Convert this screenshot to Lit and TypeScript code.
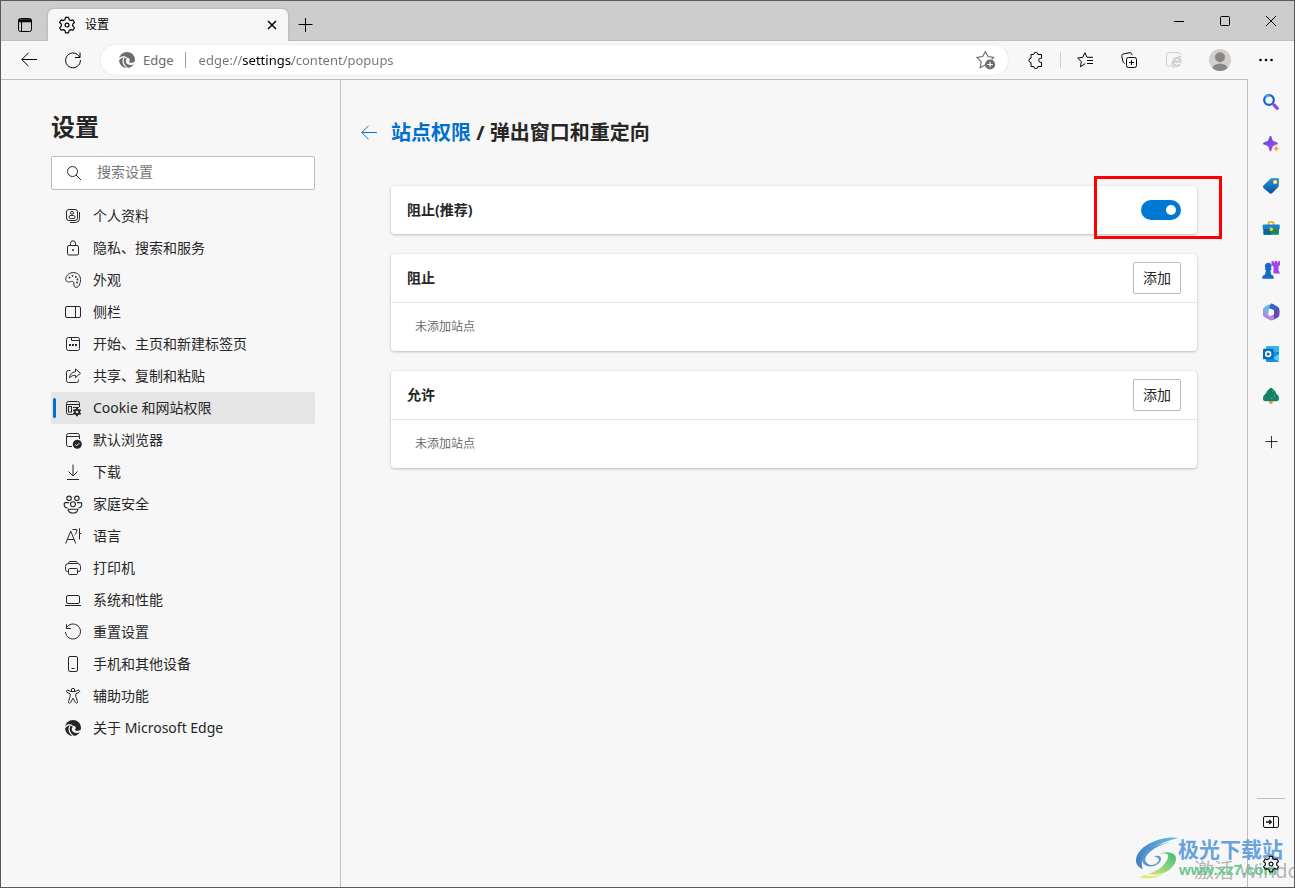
import { LitElement, html, css, svg } from "lit";
import { customElement, property } from "lit/decorators.js";
import { classMap } from "lit/directives/class-map.js";

const edgeShape = (gap: string) => svg`
  <circle cx="8" cy="8" r="8" fill="currentColor" stroke="none"/>
  <path d="M-.5 8C1.500 4.600 5 4.200 7.300 5.600" fill="none" stroke=${gap} stroke-width="1.300"/>
  <path d="M4.800 6C3 9.600 4.600 13.800 8.400 16" fill="none" stroke=${gap} stroke-width="1.200"/>
  <path d="M7 6c2.300-.8 4.300.8 3.600 2.700-.3.800-.9 1-.4 1.500 1.200 1 3.800.8 6-.8l-.6 2.300c-2 1.600-5 1.800-6.800.6C6.600 11 6 8.500 7.600 7.200z" fill=${gap} stroke="none"/>`;

const gearPath = "M6.700.8h2.600l.5 2 1.400.8 2-.6 1.300 2.300-1.500 1.400v1.700l1.500 1.400-1.300 2.300-2-.6-1.400.8-.5 2H6.700l-.5-2-1.400-.8-2 .6-1.300-2.300L3 8.400V6.700L1.500 5.300 2.800 3l2 .6 1.400-.8z";

const icons: Record<string, unknown> = {
  gear: svg`<g transform="translate(-1.100 -.5) scale(1.140)" stroke-linejoin="round" stroke-width="1.050"><path d=${gearPath}/><circle cx="8" cy="7.500" r="1.700"/></g>`,
  tabs: svg`<rect x="1.500" y="1.500" width="13" height="13" rx="2"/><path d="M1.500 3h13M1.500 4.500h13" stroke-width="1.600"/><path d="M4.500 4v10.500"/>`,
  close: svg`<path d="M4 4l8 8M12 4l-8 8" stroke-width="1.500"/>`,
  plus: svg`<path d="M8.500 1v14M1.500 7.500h14"/>`,
  minus: svg`<path d="M3 8.500h10"/>`,
  maximize: svg`<rect x="3.500" y="3.500" width="9" height="9" rx="1"/>`,
  closeWindow: svg`<path d="M3 3l10 10M13 3L3 13"/>`,
  back: svg`<path d="M16 7.500H.8M7.500.8L.8 7.500l6.700 6.700"/>`,
  refresh: svg`<path d="M14.700 5.200A7.400 7.400 0 1 0 15.400 8M15 .5v5h-5"/>`,
  edge: edgeShape("#fff"),
  edgeDark: edgeShape("#f7f7f7"),
  starAdd: svg`<path d="M8.500 12.200L3.700 14.800l.9-5.300L.8 5.700l5.200-.8L8.300.6l2.400 4.300 5 .8-1.800 1.800"/><circle cx="12.500" cy="12" r="4.500" fill="currentColor" stroke="none"/><path d="M12.500 9.500v5M10 12h5" stroke="#fff"/>`,
  puzzle: svg`<path d="M3 2.500h2.700a2.100 2.100 0 0 1 4.200 0H13.500v3.800h-.8a2 2 0 0 0 0 4h.8v4.200H9.900a2.100 2.100 0 0 1-4.200 0H3v-4a2.100 2.100 0 0 1 0-4.200z"/>`,
  favorites: svg`<path d="M8.200 11.600L3.400 14.800l1-5.200L.7 6l5-.7L7.900.8 10 5.300h6M10 8.500h6M10 11.500h6"/>`,
  collections: svg`<rect x="5.500" y="5.500" width="10" height="10" rx="2"/><path d="M10.500 8v5M8 10.500h5M3.700 11.500C2.500 11 2.300 10.500 2 9.500L.8 4.500C.5 3 1 2.300 2.300 2L8 .8c1.500-.3 2.300 0 2.800 1.500l.3 1"/>`,
  ie: svg`<path d="M4 14.500H3A2.500 2.500 0 0 1 .5 12V3A2.500 2.500 0 0 1 3 .5h9A2.500 2.500 0 0 1 14.500 3"/><path d="M14 12.300c-1.300 2.200-5.500 2-6.300-.3C6.700 8.700 8.300 6 11 6c2.800 0 3.800 1.500 3.500 3.700H8.500" stroke-width="2.200"/><path d="M15.500 4.500c-3-1-10 4.500-10 8.500 0 2.500 2.300 2.500 4 1.800" stroke-width="1.200"/>`,
  avatar: svg`<defs><clipPath id="face"><circle cx="8" cy="8" r="8"/></clipPath></defs><circle cx="8" cy="8" r="8" fill="#d2d0ce" stroke="none"/><g clip-path="url(#face)" fill="#8a8684" stroke="none"><circle cx="8" cy="6" r="3.600"/><ellipse cx="8" cy="14.300" rx="5.600" ry="3.800"/></g>`,
  more: svg`<g fill="currentColor" stroke="none"><circle cx="2.500" cy="8" r="1.300"/><circle cx="8" cy="8" r="1.300"/><circle cx="13.500" cy="8" r="1.300"/></g>`,
  search: svg`<circle cx="6.500" cy="6.500" r="5"/><path d="M10 10l5 5"/>`,
  profile: svg`<rect x="1.500" y="1.500" width="11" height="11" rx="2.500"/><circle cx="7" cy="4.800" r="1.500"/><rect x="4" y="7.500" width="6" height="3" rx="1.500"/><path d="M14.500 4v6.500a4 4 0 0 1-4 4H5"/>`,
  lock: svg`<rect x="2.500" y="5.500" width="11" height="9.500" rx="1.500"/><path d="M5.500 5.500V3.300a2.500 2.500 0 0 1 5 0v2.200"/><circle cx="8" cy="10" r="1" fill="currentColor" stroke="none"/>`,
  palette: svg`<path d="M.7 7.300C1 3 4.500.6 8.500.6c4.300 0 7 3.200 7 7 0 4-1.700 7.800-4.300 7.800-2 0-2.300-1.500-2.300-3.300 0-2-.8-3-2.300-2.700-1.800.3-2.300 1-4 .3C1.300 9.200.6 8.600.7 7.300z"/><g fill="currentColor" stroke="none"><circle cx="7.500" cy="3.800" r=".9"/><circle cx="10.800" cy="5" r=".9"/><circle cx="12.500" cy="7.500" r=".9"/><circle cx="12" cy="10.500" r=".9"/><circle cx="4.500" cy="5.500" r=".9"/></g>`,
  sidebar: svg`<rect x=".5" y="2.500" width="15" height="11" rx="1.500"/><path d="M10.500 2.500v11"/>`,
  newtab: svg`<rect x="1.500" y="1.500" width="13" height="13" rx="2"/><path d="M6.500 1.500v3h8"/><path d="M4 9h2M7 9h2M10 9h2" stroke-width="1.800"/>`,
  share: svg`<path d="M5.500 2.500h-2a2 2 0 0 0-2 2v8a2 2 0 0 0 2 2h8a2 2 0 0 0 2-2v-1"/><path d="M10.500 1l5 4.300-5 4.300V7.300c-2.800 0-4.500.7-6 2.700.3-3.700 2.300-6 6-6.300z"/>`,
  cookies: svg`<path d="M8 14.500H3.500a2 2 0 0 1-2-2v-9a2 2 0 0 1 2-2h9a2 2 0 0 1 2 2V7M1.500 4.500h13M8 7.500h6"/><rect x="3.500" y="6.500" width="3" height="5.500"/><g fill="currentColor"><circle cx="12" cy="12" r="2.700"/><path d="M12 7.700v8.600M8.300 9.900l7.400 4.200M8.300 14.100l7.400-4.200" stroke-width="1.900"/></g><circle cx="12" cy="12" r="1.300" fill="#e5e5e5" stroke="none"/>`,
  browser: svg`<path d="M7 14.500H3.500a2 2 0 0 1-2-2v-9a2 2 0 0 1 2-2h9a2 2 0 0 1 2 2V7M1.500 4.500h13"/><circle cx="12.300" cy="12.300" r="4.500" fill="currentColor" stroke="none"/><path d="M10.200 12.300l1.500 1.500 2.700-2.800" stroke="#f7f7f7"/>`,
  download: svg`<path d="M8 .5V12M3.500 7.500L8 12l4.500-4.500M2 15.500h12"/>`,
  family: svg`<g transform="translate(-1 -.7) scale(1.120)"><circle cx="4.500" cy="2.700" r="2"/><circle cx="11.500" cy="2.700" r="2"/><circle cx="8" cy="8" r="2.200"/><path d="M3.200 11.300C1.500 11.200-.2 10 .2 7.500c0-.7.300-1 1-1h3.300M12.800 11.300c1.800-.1 3.400-1.300 3-3.800 0-.7-.3-1-1-1h-3.300"/><path d="M3.700 12.400h8.600c.3 2-1.800 3.400-4.300 3.400s-4.600-1.400-4.300-3.400z"/></g>`,
  language: svg`<path d="M.7 15.500L5.700 3l5 12.500M2.400 11.500h6.600M7.500 1.500H12C12 4 11 6 9.500 7M14.500.3v11M14.500 5.500H16.300"/>`,
  printer: svg`<path d="M3.500 11.500h-1a2 2 0 0 1-2-2v-3a3 3 0 0 1 3-3h9a3 3 0 0 1 3 3v3a2 2 0 0 1-2 2h-1M3.500 3.500c0-1.500.5-2 1.500-2h6c1 0 1.500.5 1.500 2"/><rect x="3.500" y="8.500" width="9" height="6" rx="1"/>`,
  laptop: svg`<rect x="1.500" y="3.500" width="13" height="8" rx="1.500"/><path d="M0 13.500h16"/>`,
  reset: svg`<path d="M1.200 4.300A7.500 7.500 0 1 1 .5 8M1.500.3v4.200h4.300"/>`,
  phone: svg`<rect x="3.500" y=".5" width="9" height="15" rx="1.500"/><path d="M6.500 12.500h3"/>`,
  access: svg`<circle cx="8" cy="2" r="1.700"/><path d="M6 3.500L3 2.200c-1.500-.5-2.300 1.500-1 2.200l3.200 1.400v2.700l-1.700 5c-.5 1.700 1.500 2.400 2.200.9L8 10.200l2.300 4.200c.7 1.500 2.700.8 2.200-.9l-1.700-5V5.800L14 4.400c1.300-.7.5-2.700-1-2.200l-3 1.300z"/>`,
  panel: svg`<rect x=".5" y="2.500" width="15" height="11" rx="1.500"/><path d="M10.500 2.500v11"/><path d="M3 8h5.300M6.300 6l2 2-2 2" stroke-width="1.300"/>`,
  appSearch: svg`<circle cx="6" cy="6" r="4.800" stroke="#1666cf" stroke-width="2.300"/><path d="M2.500 3.500a4.800 4.800 0 0 1 4-2.300" stroke="#3ba4ea" stroke-width="2.300"/><path d="M11 11l3.300 3.300" stroke="#8d48d8" stroke-width="3.200" stroke-linecap="round"/>`,
  appSpark: svg`<defs><linearGradient id="spark" x2="1" y2="1"><stop stop-color="#4a49dd"/><stop offset="1" stop-color="#b54bf5"/></linearGradient></defs><path d="M7.500-.3c1.400 0 1.500 3.700 2.500 4.900s5 1.400 5 2.900-4 1.700-5 2.900-1.100 4.900-2.500 4.900-1.500-3.700-2.500-4.900S0 9 0 7.500s4-1.700 5-2.900S6.100-.3 7.500-.3z" fill="url(#spark)" stroke="#f7f7f7" stroke-width=".2"/><path d="M13.200 8.700l1.100 2.900 2.700 1.100-2.700 1.100-1.100 2.900-1.100-2.900-2.700-1.100 2.700-1.100z" fill="#f5a623" stroke="#f7f7f7" stroke-width=".5"/>`,
  appTag: svg`<defs><linearGradient id="tag" x2="0" y2="1"><stop stop-color="#2398dc"/><stop offset="1" stop-color="#0b4ea5"/></linearGradient></defs><path d="M8.500.3 14.500 0q1.500 0 1.500 1.500l-.2 6q0 1-1 1.900l-5.500 5.500q-1.500 1.500-3 0L.7 10.300q-1.500-1.500 0-3L7 1.200Q7.700.3 8.500.3z" fill="url(#tag)" stroke="none"/><circle cx="12.200" cy="4" r="1.700" fill="#fff" stroke="#ffc42e" stroke-width="1.100"/>`,
  appTools: svg`<path d="M5.500 5V3q0-1 1-1h3q1 0 1 1v2" stroke="#e8a317" stroke-width="1.600"/><rect x="-.3" y="4.500" width="17" height="5" rx="1" fill="#1683cb" stroke="none"/><path d="M.5 9h15.500v4.700q0 1-1 1H1.500q-1 0-1-1z" fill="#1a8a5c" stroke="none"/><path d="M.5 9h7.700v5.700H1.500q-1 0-1-1z" fill="#086a91" stroke="none"/><rect x="6.700" y="7.500" width="3.200" height="3.500" rx="1" fill="#ffbd24" stroke="none"/>`,
  appGames: svg`<path d="M8.500-1h2v1.500h1.200V-1h2.300v1.500h1.200V-1H17v4l-1.500 1.500V8l1.500 3.500h-6.500v-7L8.500 3z" fill="#a044e7" stroke="none"/><path d="M5.500.8a3.200 3.200 0 0 1 2.300 5.300l1 1.200-1.300 1 .6 4 2 1.500q.7.500.7 3H-.8q0-2.500.8-3l2.200-1.500.7-4-1.300-1 1.100-1.200A3.200 3.200 0 0 1 5.500.8z" fill="#1769c4" stroke="none"/>`,
  app365: svg`<path d="M4.500 1.300Q6 .3 8 .3h3L6 4v5.500L0 12V5.500Q0 4 1.500 3z" fill="#69b5ed" stroke="none"/><path d="M8-.4q1-.3 2 .3l5 3Q16.300 3.800 16.300 5.500v5L11 7 6 4.300z" fill="#3467bc" stroke="none"/><path d="M16.300 6v5q0 1.500-1.500 2.500L9.500 16.300 5 14l6-3.500V5z" fill="#6548af" stroke="none"/><path d="M0 6l5.300 5L8 12.500l3-1.500v4l-1.500 1q-1.500.8-3 0L1.200 13Q0 12.300 0 11z" fill="#b18ae0" stroke="none"/><path d="M5.500 6L8 4.700 11 6.300v3.700L8.300 11.500 5.500 10z" fill="#f7f7f7" stroke="none"/>`,
  appOutlook: svg`<rect x="3" y="0" width="13" height="14" rx="1" fill="#35b3ed" stroke="none"/><path d="M3 6h13v9q0 1-1 1H4q-1 0-1-1z" fill="#1490df" stroke="none"/><path d="M16 8v8l-6-4z" fill="#5bd0f6" stroke="none"/><rect x="0" y="2.800" width="10.500" height="10.500" rx="1" fill="#0868bd" stroke="none"/><circle cx="5.200" cy="8" r="2.400" stroke="#fff" stroke-width="1.600"/>`,
  appTree: svg`<path d="M6.300 11h3.400v4q0 1-1 1h-1.400q-1 0-1-1z" fill="#f1a31f" stroke="none"/><path d="M8-.2q1.200 0 2.400 1.700 2.600 1.500 2.800 4Q16 7.500 16 10.500q0 2.700-2.500 2.700h-11Q0 13.200 0 10.500q0-3 3-5.200Q3.200 3 5.800 1.500 6.800-.2 8-.2z" fill="#158269" stroke="none"/><path d="M9.500 3l1 .5M11 7l1.500 1M8 10l1.500.5" stroke="#49b07d" stroke-width="1.500"/>`,
};

@customElement("ui-icon")
export class UiIcon extends LitElement {
  @property() name = "";
  static styles = css`
    :host { display: inline-flex; flex: none; width: 16px; height: 16px; }
    .glyph { width: 100%; height: 100%; overflow: visible; fill: none; stroke: currentColor; stroke-width: 1; }
  `;
  render() {
    return html`<svg class="glyph" viewBox="0 0 16 16" aria-hidden="true">${icons[this.name]}</svg>`;
  }
}

const fonts = css`"Noto Sans", "Noto Sans CJK SC", sans-serif`;

@customElement("browser-chrome")
export class BrowserChrome extends LitElement {
  static styles = css`
    :host { display: block; flex: none; font: 13px/20px ${fonts}; color: #000; }
    button { border: 0; padding: 0; background: none; color: inherit; font: inherit; display: flex; align-items: center; justify-content: center; }
    .strip { display: flex; align-items: flex-end; height: 40px; background: #cdcdcd; box-shadow: inset 0 -1px #bebebe; }
    .action { width: 47px; height: 32px; }
    .tab { display: flex; align-items: center; gap: 10px; box-sizing: border-box; width: 240px; height: 32px; padding: 0 8px 0 11px; background: #f7f7f7; border-radius: 6px 6px 0 0; box-shadow: 0 0 3px #0003; clip-path: inset(-3px -3px 0 -3px); }
    .name { flex: 1; font-size: 12px; }
    .new { width: 34px; height: 32px; }
    .controls { display: flex; height: 40px; margin-left: auto; }
    .control { width: 46px; height: 40px; }
    .toolbar { display: flex; align-items: center; height: 38px; padding: 0 5px 0 6px; background: #f7f7f7; }
    .tool { width: 44px; height: 32px; flex: none; }
    .wide { width: 46px; }
    .address { display: flex; align-items: center; flex: 1; min-width: 0; height: 30px; box-sizing: border-box; margin: 0 6px; padding: 0 14px 0 18px; border-radius: 15px; background: #fff; box-shadow: 0 0 3px #00000014; color: #6b6b6b; }
    .brand { margin-left: 8px; }
    .bar { width: 1px; height: 16px; margin: 0 13px 0 11px; background: #9a9a9a; }
    .url { flex: 1; min-width: 0; border: 0; padding: 0; outline: 0; font: inherit; color: transparent; background: linear-gradient(90deg, #737373 44px, #000 44px, #000 93px, #737373 93px); -webkit-background-clip: text; background-clip: text; }
    .star { width: 18px; height: 18px; color: #6b6b6b; }
    .divider { width: 1px; height: 16px; margin: 0 2px; background: #cfcfcf; }
    .muted { color: #cfcfcf; }
    .avatar { width: 22px; height: 22px; }
  `;
  render() {
    return html`
      <div class="strip">
        <button class="action" aria-label="标签操作"><ui-icon name="tabs"></ui-icon></button>
        <div class="tab">
          <ui-icon name="gear"></ui-icon><span class="name">设置</span>
          <button aria-label="关闭标签页"><ui-icon name="close"></ui-icon></button>
        </div>
        <button class="new" aria-label="新建标签页"><ui-icon name="plus"></ui-icon></button>
        <div class="controls">
          <button class="control" aria-label="最小化"><ui-icon name="minus"></ui-icon></button>
          <button class="control" aria-label="最大化"><ui-icon name="maximize"></ui-icon></button>
          <button class="control" aria-label="关闭"><ui-icon name="closeWindow"></ui-icon></button>
        </div>
      </div>
      <div class="toolbar">
        <button class="tool" aria-label="返回"><ui-icon name="back"></ui-icon></button>
        <button class="tool" aria-label="刷新"><ui-icon name="refresh"></ui-icon></button>
        <div class="address">
          <ui-icon name="edge"></ui-icon><span class="brand">Edge</span><span class="bar"></span>
          <input class="url" aria-label="地址栏" value="edge://settings/content/popups" />
          <button aria-label="收藏此页"><ui-icon class="star" name="starAdd"></ui-icon></button>
        </div>
        <button class="tool" aria-label="扩展"><ui-icon name="puzzle"></ui-icon></button>
        <span class="divider"></span>
        <button class="tool" aria-label="收藏夹"><ui-icon name="favorites"></ui-icon></button>
        <button class="tool" aria-label="集锦"><ui-icon name="collections"></ui-icon></button>
        <button class="tool wide muted" aria-label="IE 模式"><ui-icon name="ie"></ui-icon></button>
        <button class="tool wide" aria-label="个人资料"><ui-icon class="avatar" name="avatar"></ui-icon></button>
        <button class="tool wide" aria-label="更多"><ui-icon name="more"></ui-icon></button>
      </div>`;
  }
}

const sections: [string, string][] = [
  ["profile", "个人资料"],
  ["lock", "隐私、搜索和服务"],
  ["palette", "外观"],
  ["sidebar", "侧栏"],
  ["newtab", "开始、主页和新建标签页"],
  ["share", "共享、复制和粘贴"],
  ["cookies", "Cookie 和网站权限"],
  ["browser", "默认浏览器"],
  ["download", "下载"],
  ["family", "家庭安全"],
  ["language", "语言"],
  ["printer", "打印机"],
  ["laptop", "系统和性能"],
  ["reset", "重置设置"],
  ["phone", "手机和其他设备"],
  ["access", "辅助功能"],
  ["edgeDark", "关于 Microsoft Edge"],
];

@customElement("settings-nav")
export class SettingsNav extends LitElement {
  static styles = css`
    :host { display: block; flex: none; box-sizing: border-box; width: 340px; padding: 31px 25px 0 50px; border-right: 1px solid #bdbdbd; font: 14px/20px ${fonts}; color: #262626; }
    .title { margin: 0 0 13px; font-size: 24px; line-height: 32px; font-weight: 700; }
    .search { display: flex; align-items: center; gap: 15px; box-sizing: border-box; height: 34px; padding: 0 14px; border: 1px solid #bcbcbc; border-radius: 2px; background: #fff; }
    .field { flex: 1; min-width: 0; border: 0; padding: 0 0 2px; outline: 0; background: none; font: inherit; color: inherit; }
    .field::placeholder { color: #767676; }
    .list { display: flex; flex-direction: column; padding-top: 10px; }
    .item { position: relative; display: flex; align-items: center; gap: 12px; height: 32px; padding-left: 14px; border-radius: 2px; color: inherit; text-decoration: none; }
    .active { background: #e5e5e5; }
    .active::before { content: ""; position: absolute; left: 2px; top: 6px; bottom: 6px; width: 3px; border-radius: 2px; background: #0070cc; }
  `;
  render() {
    return html`
      <h1 class="title">设置</h1>
      <label class="search"><ui-icon name="search"></ui-icon><input class="field" type="text" placeholder="搜索设置" aria-label="搜索设置" /></label>
      <nav class="list">
        ${sections.map(([icon, label]) => html`
          <a href="#${icon}" class=${classMap({ item: true, active: icon === "cookies" })}><ui-icon name=${icon}></ui-icon><span>${label}</span></a>`)}
      </nav>`;
  }
}

@customElement("popup-settings")
export class PopupSettings extends LitElement {
  static styles = css`
    :host { display: block; flex: 1; min-width: 0; padding: 38px 50px 0 0; font: 14px/20px ${fonts}; color: #262626; }
    .head { display: flex; align-items: center; gap: 14px; padding-left: 20px; margin-bottom: 38px; }
    .back { display: flex; border: 0; padding: 0; background: none; color: #0078d4; }
    .crumbs { margin: 0; font-size: 20px; line-height: 30px; font-weight: 700; }
    .link { color: #0070cc; text-decoration: none; }
    .cards { display: flex; flex-direction: column; gap: 20px; padding-left: 50px; }
    .card { position: relative; background: #fff; border-radius: 4px; box-shadow: 0 1px 3px #00000038, 0 0 2px #00000014; }
    .row { display: flex; align-items: center; justify-content: space-between; height: 48px; padding: 0 16px; }
    .label { margin: 0; font-size: 14px; line-height: 20px; font-weight: 700; }
    .empty { display: flex; align-items: center; height: 48px; margin: 0; padding: 0 24px; border-top: 1px solid #e5e5e5; font-size: 12px; color: #6b6b6b; }
    .add { height: 32px; padding: 0 9px; border: 1px solid #bcbcbc; border-radius: 2px; background: #fff; color: inherit; font: inherit; }
    .toggle { appearance: none; display: flex; align-items: center; justify-content: flex-end; box-sizing: border-box; width: 40px; height: 20px; margin: 0; padding: 0 5px; border-radius: 10px; background: #0078d4; }
    .toggle::before { content: ""; width: 10px; height: 10px; border-radius: 50%; background: #fff; }
    .toggle:not(:checked) { justify-content: flex-start; background: #8a8a8a; }
    .mark { position: absolute; top: -10px; right: -25px; box-sizing: border-box; width: 128px; height: 63px; border: 3px solid #f00; pointer-events: none; }
  `;
  render() {
    return html`
      <div class="head">
        <button class="back" aria-label="返回"><ui-icon name="back"></ui-icon></button>
        <h2 class="crumbs"><a class="link" href="#content">站点权限</a> / 弹出窗口和重定向</h2>
      </div>
      <div class="cards">
        <section class="card">
          <div class="row"><label class="label" for="block">阻止(推荐)</label><input class="toggle" id="block" type="checkbox" role="switch" checked /></div>
          <div class="mark"></div>
        </section>
        ${["阻止", "允许"].map((title) => html`
          <section class="card">
            <div class="row"><h3 class="label">${title}</h3><button class="add">添加</button></div>
            <p class="empty">未添加站点</p>
          </section>`)}
      </div>`;
  }
}

const apps: [string, string][] = [
  ["appSearch", "搜索"], ["appSpark", "发现"], ["appTag", "购物"], ["appTools", "工具"],
  ["appGames", "游戏"], ["app365", "Microsoft 365"], ["appOutlook", "Outlook"], ["appTree", "电子树"],
];

@customElement("edge-sidebar")
export class EdgeSidebar extends LitElement {
  static styles = css`
    :host { position: relative; z-index: 2; display: flex; flex-direction: column; align-items: center; flex: none; width: 46px; padding: 2px 0; box-sizing: border-box; color: #111; }
    .app { display: flex; align-items: center; justify-content: center; width: 46px; height: 42px; flex: none; border: 0; padding: 0; background: none; color: inherit; }
    .add { margin-top: 4px; }
    .small { width: 14px; height: 14px; }
    .rule { width: 28px; height: 1px; margin: auto 0 2px; background: #bdbdbd; }
  `;
  render() {
    return html`
      ${apps.map(([icon, label]) => html`<button class="app" aria-label=${label}><ui-icon name=${icon}></ui-icon></button>`)}
      <button class="app add" aria-label="添加"><ui-icon class="small" name="plus"></ui-icon></button>
      <div class="rule"></div>
      <button class="app" aria-label="隐藏侧栏"><ui-icon name="panel"></ui-icon></button>
      <button class="app" aria-label="设置"><ui-icon name="gear"></ui-icon></button>`;
  }
}

@customElement("app-root")
export class AppRoot extends LitElement {
  static styles = css`
    :host { display: block; }
    .window { position: relative; display: flex; flex-direction: column; box-sizing: border-box; min-height: 100vh; overflow: hidden; border: 1px solid #59595b; background: #f7f7f7; }
    .body { display: flex; flex: 1; }
    .page { display: flex; flex: 1; min-width: 0; border: solid #bdbdbd; border-width: 1px 1px 0 0; }
    .watermark { position: absolute; z-index: 1; right: 0; bottom: 0; width: 159px; height: 54px; pointer-events: none; font-family: "Noto Sans CJK SC", sans-serif; white-space: nowrap; }
    .logo { position: absolute; left: 0; top: 3px; width: 46px; height: 44px; }
    .site { position: absolute; left: 43px; top: 0; font-size: 21px; line-height: 30px; font-weight: 700; color: #6aa2dc; }
    .host { position: absolute; left: 44px; top: 27px; font: 700 15px/20px "Liberation Sans", sans-serif; color: #68c98d; }
    .activate { position: absolute; left: 59px; top: 24px; font: 20px/28px "Noto Sans", "Noto Sans CJK SC", sans-serif; color: #8888889c; }
  `;
  render() {
    return html`
      <div class="window">
        <browser-chrome></browser-chrome>
        <div class="body">
          <div class="page"><settings-nav></settings-nav><popup-settings></popup-settings></div>
          <edge-sidebar></edge-sidebar>
        </div>
        <div class="watermark">
          <span class="activate">激活 Windows</span>
          <svg class="logo" viewBox="0 0 46 44" aria-hidden="true">
            <defs>
              <linearGradient id="sky" x2="1" y2="0"><stop stop-color="#477fc2"/><stop offset="1" stop-color="#67c4ef"/></linearGradient>
              <linearGradient id="leaf" x1="1" y1="0" x2="0" y2="1"><stop stop-color="#3dbb7f"/><stop offset="1" stop-color="#d9e873"/></linearGradient>
            </defs>
            <path d="M44 2C28-1 2 9 1 24c0 5 3 8 7 9C2 22 18 7 44 2z" fill="url(#sky)"/>
            <path d="M36 6C22 9 7 19 11 26c3 5 12 3 13-2 0-2-3-4-6-3 8-4 10 2 6 6-6 6-17 4-17-4C8 15 22 8 36 6z" fill="#5a94d2"/>
            <path d="M24 18c8-2 11 0 8 6C28 32 20 36 12 38c14 3 27-4 29-14 1-7-8-10-17-6z" fill="url(#leaf)"/>
            <path d="M4 41c9 3 20 1 27-5-8 5-15 5-21 3-2 1-4 1-6 2z" fill="#dfe879"/>
          </svg>
          <span class="site">极光下载站</span>
          <span class="host">www.xz7.com</span>
        </div>
      </div>`;
  }
}
